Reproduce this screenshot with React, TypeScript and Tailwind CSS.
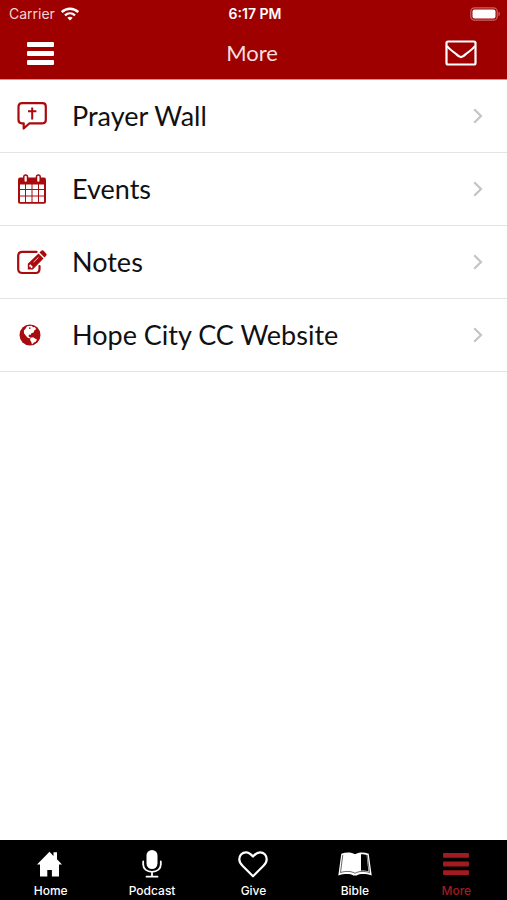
import React from "react";

function WifiIcon() {
  return (
    <svg width="18" height="14" viewBox="0 0 18 14" fill="none" stroke="#fff" strokeWidth="2.4" aria-hidden="true">
      <path d="M.8 5C5.500.700 12.500.700 17.200 5" />
      <path d="M4 8.400c2.900-2.700 7.100-2.700 10 0" />
      <path d="M6.300 10.800c1.600-1.500 3.800-1.500 5.400 0L9 13.500z" fill="#fff" stroke="none" />
    </svg>
  );
}

function BatteryIcon() {
  return (
    <svg width="31" height="14" viewBox="0 0 31 14" aria-hidden="true">
      <rect x=".8" y=".8" width="26.400" height="12.400" rx="3.800" fill="none" stroke="#c86464" strokeWidth="1.200" />
      <rect x="2.500" y="2.500" width="23" height="9" rx="2" fill="#fff" />
      <path d="M28.500 4.800c1.800.6 1.800 3.800 0 4.400z" fill="#c86464" />
    </svg>
  );
}

function BarsIcon({ className }: { className: string }) {
  return (
    <svg viewBox="0 0 27 23" fill="currentColor" className={className} aria-hidden="true">
      <rect y="0" width="27" height="5" rx="1" />
      <rect y="9" width="27" height="5" rx="1" />
      <rect y="18" width="27" height="5" rx="1" />
    </svg>
  );
}

function MailIcon() {
  return (
    <svg width="32" height="26" viewBox="0 0 32 26" fill="none" stroke="#fff" strokeWidth="2.200" strokeLinejoin="round" aria-hidden="true">
      <rect x="1.500" y="1.500" width="29" height="23" rx="1.500" />
      <path d="M2 6c1.500 2.300 5 4.800 9.500 8.400 3.600 3.500 5.400 3.500 9 0C25 10.800 28.500 8.300 30 6" />
    </svg>
  );
}

function PrayerIcon() {
  return (
    <svg width="30" height="29" viewBox="0 0 30 29" fill="none" stroke="currentColor" aria-hidden="true">
      <path d="M5 1.200h20.500q3.300 0 3.300 3.300V18q0 3.300-3.300 3.300H12.500L6.700 26.500V21.300H5Q1.500 21.300 1.500 18V4.500Q1.500 1.200 5 1.200z" strokeWidth="2.200" strokeLinejoin="round" />
      <path d="M15.200 5.500v12M11 9.300h8.400" strokeWidth="2" />
    </svg>
  );
}

function CalendarIcon() {
  return (
    <svg width="28" height="30" viewBox="0 0 28 30" aria-hidden="true">
      <path d="M2 3.500h24q2 0 2 2v22.300q0 2-2 2H2q-2 0-2-2V5.500q0-2 2-2z" fill="currentColor" />
      <g fill="#fff">
        <path d="M2 10.500h5v4.500H2zM8 10.500h5.500v4.500H8zM14.500 10.500H20v4.500h-5.500zM21 10.500h5v4.500h-5z" />
        <path d="M2 16h5v5.500H2zM8 16h5.500v5.500H8zM14.500 16H20v5.500h-5.500zM21 16h5v5.500h-5z" />
        <path d="M2 22.500h5V28H2zM8 22.500h5.500V28H8zM14.500 22.500H20V28h-5.500zM21 22.500h5V28h-5z" />
      </g>
      <g fill="#fff" stroke="currentColor" strokeWidth="1.500">
        <rect x="5.800" y=".9" width="3.700" height="7.600" rx="1.800" />
        <rect x="18.500" y=".9" width="3.700" height="7.600" rx="1.800" />
      </g>
    </svg>
  );
}

function NotesIcon() {
  return (
    <svg width="30" height="25" viewBox="0 0 30 25" aria-hidden="true">
      <path d="M19.500 1.900H5.500Q1.200 1.900 1.200 6v13Q1.200 23 5.500 23h13.300q3.700 0 3.700-4v-3" fill="none" stroke="currentColor" strokeWidth="2.200" strokeLinecap="round" />
      <path d="M10.800 19.500v-5.800L21.500 3.500l5 5-10.700 11z" fill="currentColor" />
      <path d="m22.500 2.500 1.700-1.700q1.200-1 2.400 0l2.500 2.600q1 1.200 0 2.300L27.500 7.400z" fill="currentColor" />
      <path d="M12.300 15.300v1.400h1.500v1.500l1-.1 1.100-1.100-2.600-2.700z" fill="#fff" />
      <path d="m16.500 12.200 5-4.800" stroke="#fff" strokeWidth=".8" />
    </svg>
  );
}

function GlobeIcon() {
  return (
    <svg width="22" height="22" viewBox="0 0 22 22" aria-hidden="true">
      <circle cx="11" cy="11" r="10.500" fill="currentColor" />
      <path d="M8 2.200 12.500 1.700l1.700 1.600 1.500-.2 1.500 2-1.900 1.500-.7 1.900-2.300.7-.8 1.700-1.300-.3-.7 1.300.9 1.300 1.500.5-.4.900-2.900-.9L6.300 11 5 9.200 4.900 6.400 6.500 4.800z" fill="#fff" />
      <path d="m11.800 13.700 2.400-.4 1.700 1.300 2.100.8-1.300 2.300-1.800.8-1.900 2-.8-2.800-1.200-1.700z" fill="#fff" />
      <path d="m10.500 3.200 1.400.6-.8 1.300-1.300-.5z" fill="currentColor" />
    </svg>
  );
}

function ChevronIcon() {
  return (
    <svg width="10" height="16" viewBox="0 0 10 16" fill="none" stroke="#c4c4c6" strokeWidth="2.200" aria-hidden="true">
      <path d="m1.200 1.200 6.800 6.800-6.800 6.800" />
    </svg>
  );
}

function HomeIcon() {
  return (
    <svg width="28" height="26" viewBox="0 0 28 26" fill="currentColor" aria-hidden="true">
      <path d="M12.500.800 0 13.500h3V25.500h7.300V19h4.600v6.500H22V13.500h3L20 8.300V1.300H16.500v3.600z" />
    </svg>
  );
}

function MicIcon() {
  return (
    <svg width="20" height="28" viewBox="0 0 20 28" fill="none" stroke="currentColor" strokeWidth="1.800" aria-hidden="true">
      <rect x="4.500" y="0" width="11" height="19" rx="5.500" fill="currentColor" stroke="none" />
      <path d="M1.200 11.500v3c0 4.500 3.800 7.300 8.800 7.300s8.800-2.800 8.800-7.300v-3M10 22v4.500M4.500 26.700h11" strokeLinecap="round" />
    </svg>
  );
}

function HeartIcon() {
  return (
    <svg width="30" height="27" viewBox="0 0 30 27" fill="none" stroke="currentColor" strokeWidth="2.200" strokeLinejoin="round" aria-hidden="true">
      <path d="M15 5.500C12.500 2.500 10.600 1.300 8 1.300 4.200 1.300 1.300 4.400 1.300 8.300c0 2.800 1.200 4.600 3.200 6.500L15 25.300l10.500-10.500c2-1.900 3.200-3.700 3.200-6.500 0-3.900-2.900-7-6.700-7-2.600 0-4.500 1.200-7 4.200z" />
    </svg>
  );
}

function BookIcon() {
  return (
    <svg width="34" height="24" viewBox="0 0 34 24" aria-hidden="true">
      <path d="M3.300 1.800C8 .3 13 0 17 2.300 21 0 26 .3 30.700 1.800L33.700 23.500C28 21.800 22 21.500 18.700 23.500h-3.400C12 21.500 6 21.800.3 23.500z" fill="currentColor" />
      <path d="M4.800 3 2.500 20.500c5-1.500 10.500-1.600 14.500.8 4-2.400 9.500-2.300 14.500-.8L29.200 3" fill="none" stroke="#000" strokeWidth=".6" />
      <path d="M23 2.200c2.200-.2 4 .1 5.600.8l1.800 16.300c-2.500-.7-4.900-.9-7.400-.6z" fill="#000" />
    </svg>
  );
}

const rows = [
  { label: "Prayer Wall", icon: <PrayerIcon /> },
  { label: "Events", icon: <CalendarIcon /> },
  { label: "Notes", icon: <NotesIcon /> },
  { label: "Hope City CC Website", icon: <span className="pr-1"><GlobeIcon /></span> },
];

const tabs = [
  { label: "Home", icon: <HomeIcon /> },
  { label: "Podcast", icon: <MicIcon /> },
  { label: "Give", icon: <HeartIcon /> },
  { label: "Bible", icon: <BookIcon /> },
  { label: "More", icon: <BarsIcon className="h-[22px] w-[26px]" />, active: true },
];

export default function App() {
  return (
    <div className="flex min-h-screen flex-col bg-white font-['Inter',sans-serif]">
      <header className="border-b border-[#e08a8a] bg-[#9e0000] text-white">
        <div className="grid h-[27px] grid-cols-3 items-center pr-1.5 pl-[9px] text-[14px]">
          <span className="flex items-center gap-1.5 text-[#f3d5d5]">
            Carrier <WifiIcon />
          </span>
          <span className="text-center font-semibold whitespace-nowrap">6:17 PM</span>
          <span className="flex justify-end">
            <BatteryIcon />
          </span>
        </div>
        <div className="grid h-[52px] grid-cols-3 items-center pr-[30px] pl-[27px]">
          <button type="button" aria-label="Menu" className="justify-self-start">
            <BarsIcon className="h-[23px] w-[27px]" />
          </button>
          <h1 className="text-center font-['Lato',sans-serif] text-[22px] leading-7 text-[#f8dede]">More</h1>
          <button type="button" aria-label="Messages" className="justify-self-end">
            <MailIcon />
          </button>
        </div>
      </header>

      <main className="flex-1">
        <ul>
          {rows.map((row) => (
            <li key={row.label} className="border-b border-[#e4e4e4]">
              <a href="#" className="flex h-[72px] items-center pr-6 pl-4 text-[#111]">
                <span className="flex w-14 shrink-0 text-[#a80a0e]">
                  <span className="flex w-[31px] justify-center">{row.icon}</span>
                </span>
                <span className="flex-1 font-['Lato',sans-serif] text-[27px] leading-9">{row.label}</span>
                <ChevronIcon />
              </a>
            </li>
          ))}
        </ul>
      </main>

      <nav className="grid h-[60px] grid-cols-5 bg-black">
        {tabs.map((tab) => (
          <a
            key={tab.label}
            href="#"
            aria-current={tab.active ? "page" : undefined}
            className={
              "flex flex-col items-center pt-2 text-[12px] leading-4 font-medium " +
              (tab.active ? "text-[#a31b20]" : "text-white")
            }
          >
            <span className="flex h-8 items-center">{tab.icon}</span>
            <span className="mt-[3px]">{tab.label}</span>
          </a>
        ))}
      </nav>
    </div>
  );
}
